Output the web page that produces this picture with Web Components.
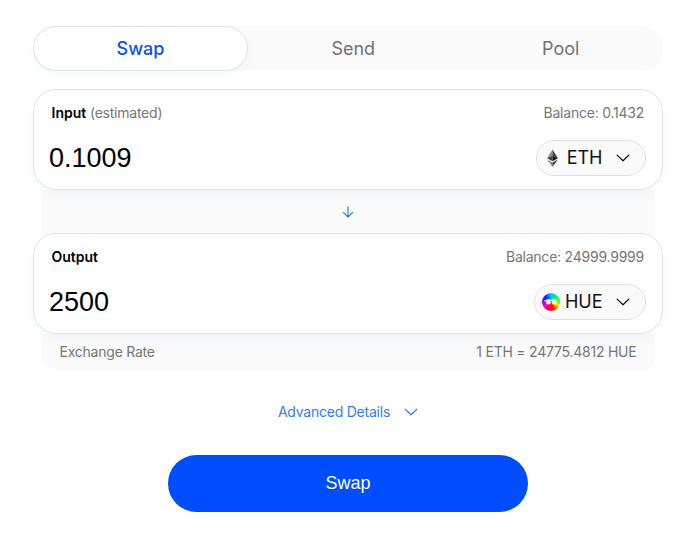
<!DOCTYPE html>
<html lang="en">
<head>
  <meta charset="utf-8">
  <title>Swap</title>
  <style>
    body {
      margin: 0;
      background: #fff;
      font-family: Inter, sans-serif;
      font-weight: 400;
    }
  </style>
</head>
<body>
  <swap-app></swap-app>

  <script>
    /**
     * Attaches an open shadow root with the given markup.
     */
    class BaseElement extends HTMLElement {
      constructor() {
        super();
        const template = document.createElement('template');
        template.innerHTML = this.render();
        this.attachShadow({ mode: 'open' }).appendChild(template.content.cloneNode(true));
      }

      render() {
        return '<slot></slot>';
      }
    }

    /**
     * A single tab. Set the `active` attribute for the raised look.
     */
    class TabItem extends BaseElement {
      render() {
        return `
          <style>
            :host {
              display: flex;
              align-items: center;
              justify-content: center;
              box-sizing: border-box;
              flex: 1 0 0;
              height: 45px;
              padding-left: 3px;
              border: 1px solid transparent;
              border-radius: 23px;
              color: #737373;
              font-size: 18px;
              cursor: pointer;
            }
            :host([active]) {
              flex: 0 0 215px;
              padding-left: 0;
              border-color: #e1e1e1;
              background: #fff;
              color: #0a50f5;
              font-weight: 500;
              box-shadow: 0 4px 8px rgba(47, 128, 237, 0.05);
            }
          </style>
          <slot></slot>
        `;
      }
    }

    class TabBar extends BaseElement {
      render() {
        return `
          <style>
            :host {
              display: flex;
              height: 45px;
              border-radius: 23px;
              background: #fafafa;
            }
          </style>
          <slot></slot>
        `;
      }
    }

    class ChevronIcon extends BaseElement {
      render() {
        return `
          <style>
            :host { display: block; width: 14px; height: 8px; }
            svg { display: block; }
          </style>
          <svg width="14" height="8" viewBox="0 0 14 8" fill="none" stroke="currentColor" stroke-width="1.2" stroke-linecap="round" stroke-linejoin="round">
            <path d="M1.2 1.2 L7 6.8 L12.8 1.2"/>
          </svg>
        `;
      }
    }

    class EthIcon extends BaseElement {
      render() {
        return `
          <style>
            :host { display: block; width: 18px; height: 18px; }
            svg { display: block; }
          </style>
          <svg width="18" height="18" viewBox="0 0 18 18">
            <path d="M8.5 0.5 L3.1 9.2 L8.5 6.8 Z" fill="#8a8a8a"/>
            <path d="M8.5 0.5 L13.9 9.2 L8.5 6.8 Z" fill="#3c3c3c"/>
            <path d="M3.1 9.2 L8.5 6.8 V12.3 Z" fill="#454545"/>
            <path d="M13.9 9.2 L8.5 6.8 V12.3 Z" fill="#141414"/>
            <path d="M3.1 10.4 L8.5 13.5 V17.7 Z" fill="#8c8c8c"/>
            <path d="M13.9 10.4 L8.5 13.5 V17.7 Z" fill="#3c3c3b"/>
          </svg>
        `;
      }
    }

    class HueIcon extends BaseElement {
      render() {
        return `
          <style>
            :host {
              display: block;
              width: 18px;
              height: 18px;
              border-radius: 50%;
              background: conic-gradient(#00c8ff, #00ff60 50deg, #40ff00 80deg, #ffe000 115deg, #ff2000 155deg, #ff0030 195deg, #ff00c8 240deg, #9000ff 275deg, #1020ff 310deg, #00c8ff);
            }
            svg { display: block; }
          </style>
          <svg width="18" height="18" viewBox="0 0 18 18" fill="#fff">
            <path d="M4.3 6.3 H8.6 V7.3 H10.4 V6.3 H14.7 V11.3 H10.4 V8.1 H8.6 V11.3 H4.3 V8.1 H3.3 V9.1 H2.5 V7.3 H4.3 Z"/>
          </svg>
        `;
      }
    }

    /**
     * Token selector pill: icon slot, symbol and chevron.
     */
    class TokenSelect extends BaseElement {
      render() {
        return `
          <style>
            :host {
              display: flex;
              align-items: center;
              box-sizing: border-box;
              height: 36px;
              padding: 0 15px 0 7px;
              border: 1px solid #e1e1e1;
              border-radius: 18px;
              background: #fafafa;
              color: #111;
              font-size: 18px;
              cursor: pointer;
            }
            .symbol { margin: 0 13.5px 0 4.5px; }
          </style>
          <slot name="icon"></slot>
          <span class="symbol"><slot></slot></span>
          <chevron-icon></chevron-icon>
        `;
      }
    }

    /**
     * Card with label, balance, amount and a token selector.
     */
    class CurrencyPanel extends BaseElement {
      render() {
        return `
          <style>
            :host {
              display: flex;
              flex-direction: column;
              box-sizing: border-box;
              position: relative;
              height: 101px;
              padding: 0 16px 0 15px;
              border: 1px solid #e1e1e1;
              border-radius: 23px;
              background: #fff;
              box-shadow: 0 4px 8px rgba(47, 128, 237, 0.05);
            }
            .row {
              display: flex;
              align-items: center;
              justify-content: space-between;
            }
            .labels {
              height: 16px;
              margin-top: 14.5px;
              padding: 0 2px 0 2.5px;
              color: #777;
              font-size: 14px;
              letter-spacing: -0.23px;
              line-height: 16px;
            }
            .labels ::slotted(b) {
              color: #000;
              font-weight: 600;
              letter-spacing: 0;
            }
            .amount {
              height: 36px;
              margin-top: 19px;
              color: #000;
            }
            .value {
              padding-top: 1px;
              font-family: "Liberation Sans", Arial, sans-serif;
              font-size: 27px;
            }
          </style>
          <div class="row labels">
            <span><slot name="label"></slot> <slot name="note"></slot></span>
            <slot name="balance"></slot>
          </div>
          <div class="row amount">
            <span class="value"><slot name="amount"></slot></span>
            <slot name="token"></slot>
          </div>
        `;
      }
    }

    class SwapArrow extends BaseElement {
      render() {
        return `
          <style>
            :host {
              display: flex;
              align-items: center;
              justify-content: center;
              height: 43px;
              margin: 0 8.5px;
              background: #fafafa;
            }
          </style>
          <svg width="12" height="12" viewBox="0 0 12 12" fill="none" stroke="#2f80ed" stroke-width="1.2" stroke-linecap="round" stroke-linejoin="round">
            <path d="M6 0.8 V11 M1.4 6.4 L6 11 L10.6 6.4"/>
          </svg>
        `;
      }
    }

    class RateRow extends BaseElement {
      render() {
        return `
          <style>
            :host {
              display: flex;
              align-items: center;
              justify-content: space-between;
              height: 35px;
              margin: 0 8.5px;
              padding: 0 18px;
              border-radius: 0 0 11px 11px;
              background: #fafafa;
              color: #777;
              font-size: 14px;
              letter-spacing: -0.23px;
            }
          </style>
          <slot></slot>
        `;
      }
    }

    class DetailsToggle extends BaseElement {
      render() {
        return `
          <style>
            :host {
              display: flex;
              align-items: center;
              justify-content: center;
              gap: 14px;
              height: 20px;
              color: #2f80ed;
              font-size: 14px;
              letter-spacing: -0.23px;
              cursor: pointer;
            }
          </style>
          <slot></slot>
          <chevron-icon></chevron-icon>
        `;
      }
    }

    class PrimaryButton extends BaseElement {
      render() {
        return `
          <style>
            :host { display: flex; justify-content: center; }
            button {
              width: 360px;
              height: 57px;
              border: 0;
              border-radius: 29px;
              background: #004cff;
              color: #fff;
              font-family: "Liberation Sans", Arial, sans-serif;
              font-size: 18px;
              cursor: pointer;
            }
          </style>
          <button><slot></slot></button>
        `;
      }
    }

    class SwapApp extends BaseElement {
      render() {
        return `
          <style>
            :host {
              display: block;
              box-sizing: border-box;
              width: 700px;
              height: 547px;
              padding: 26px 37px 0 33px;
            }
            tab-bar { margin-bottom: 18px; }
            details-toggle { margin-top: 32.5px; }
            primary-button { margin-top: 33px; }
          </style>
          <tab-bar>
            <tab-item active>Swap</tab-item>
            <tab-item>Send</tab-item>
            <tab-item>Pool</tab-item>
          </tab-bar>
          <currency-panel>
            <b slot="label">Input</b>
            <span slot="note">(estimated)</span>
            <span slot="balance">Balance: 0.1432</span>
            <span slot="amount">0.1009</span>
            <token-select slot="token"><eth-icon slot="icon"></eth-icon>ETH</token-select>
          </currency-panel>
          <swap-arrow></swap-arrow>
          <currency-panel>
            <b slot="label">Output</b>
            <span slot="balance">Balance: 24999.9999</span>
            <span slot="amount">2500</span>
            <token-select slot="token"><hue-icon slot="icon"></hue-icon>HUE</token-select>
          </currency-panel>
          <rate-row>
            <span>Exchange Rate</span>
            <span>1 ETH = 24775.4812 HUE</span>
          </rate-row>
          <details-toggle>Advanced Details</details-toggle>
          <primary-button>Swap</primary-button>
        `;
      }
    }

    customElements.define('tab-item', TabItem);
    customElements.define('tab-bar', TabBar);
    customElements.define('chevron-icon', ChevronIcon);
    customElements.define('eth-icon', EthIcon);
    customElements.define('hue-icon', HueIcon);
    customElements.define('token-select', TokenSelect);
    customElements.define('currency-panel', CurrencyPanel);
    customElements.define('swap-arrow', SwapArrow);
    customElements.define('rate-row', RateRow);
    customElements.define('details-toggle', DetailsToggle);
    customElements.define('primary-button', PrimaryButton);
    customElements.define('swap-app', SwapApp);
  </script>
</body>
</html>
